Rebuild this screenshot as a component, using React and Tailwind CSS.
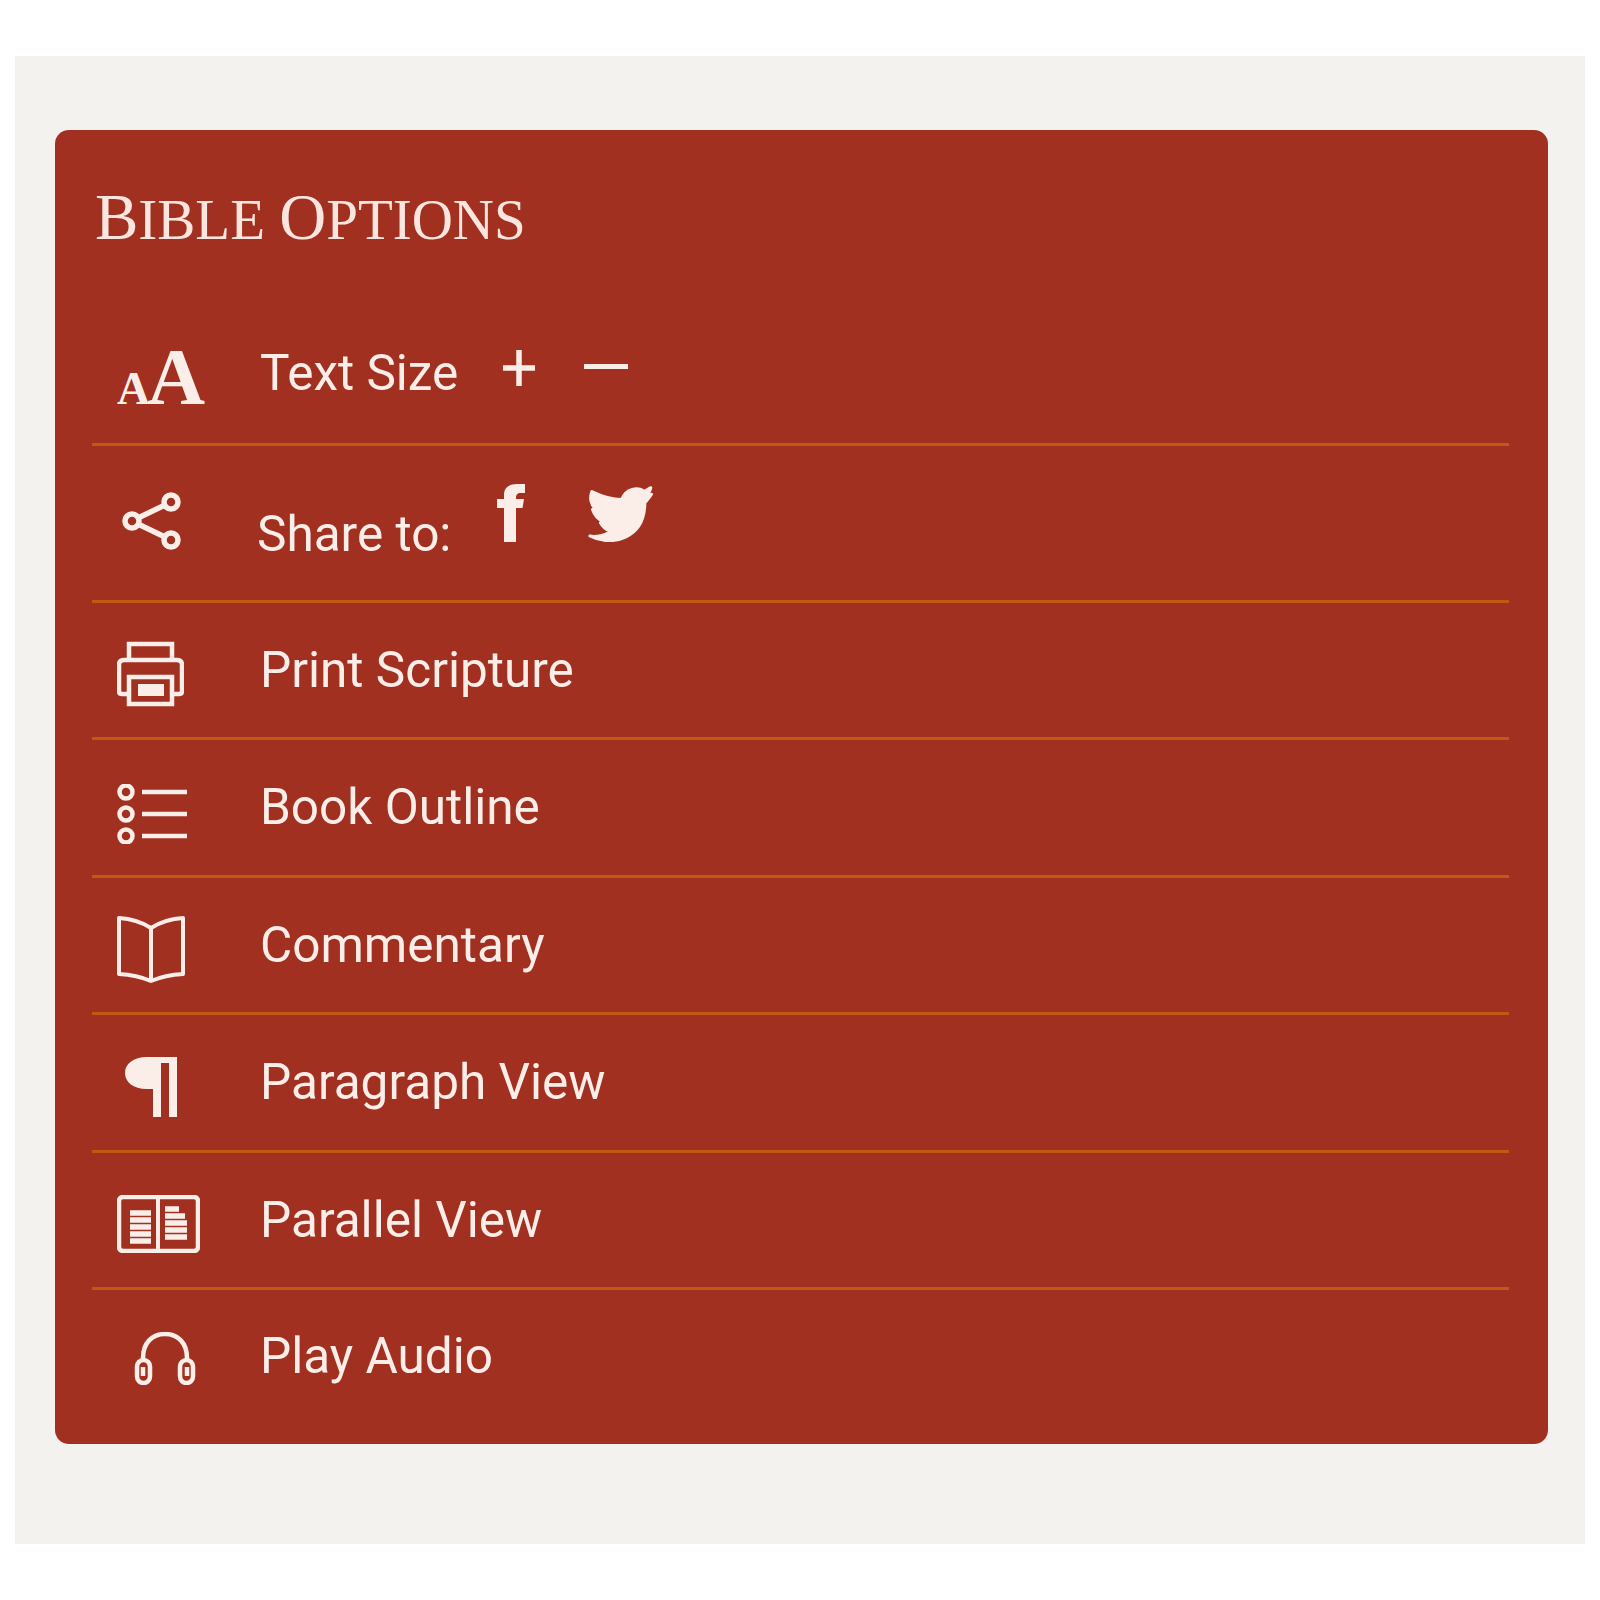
import React from 'react'

function ShareIcon() {
  return (
    <svg width="60" height="60" viewBox="0 0 60 60" fill="none" stroke="currentColor" strokeWidth="5.5">
      <circle cx="10" cy="30" r="7" />
      <circle cx="49" cy="11" r="7" />
      <circle cx="49" cy="49" r="7" />
      <path d="M16 27 L43 14 M16 33 L43 46" />
    </svg>
  )
}

function PrintIcon() {
  return (
    <svg width="67" height="66" viewBox="0 0 67 66" fill="none" stroke="currentColor" strokeWidth="4.5">
      <path d="M12 20 V3 H55 V20" />
      <path d="M12 53 H5 Q2 53 2 50 V24 Q2 19 7 19 H60 Q65 19 65 24 V50 Q65 53 62 53 H55" />
      <path d="M12 36 H55 V63 H12 Z" />
      <rect x="21" y="43" width="26" height="12" fill="currentColor" stroke="none" />
    </svg>
  )
}

function ListIcon() {
  return (
    <svg width="71" height="60" viewBox="0 0 71 60" fill="none" stroke="currentColor">
      <circle cx="9" cy="8" r="6.5" strokeWidth="4.5" />
      <circle cx="9" cy="30" r="6.5" strokeWidth="4.5" />
      <circle cx="9" cy="52" r="6.5" strokeWidth="4.5" />
      <path d="M25 8 H70 M25 30 H70 M25 52 H70" strokeWidth="4.5" />
    </svg>
  )
}

function BookIcon() {
  return (
    <svg width="68" height="67" viewBox="0 0 68 67" fill="none" stroke="currentColor" strokeWidth="4" strokeLinejoin="round">
      <path d="M34 12 Q20 3 2 2 V58 Q20 59 34 65 Q48 59 66 58 V2 Q48 3 34 12 Z" />
      <path d="M34 12 V65" />
    </svg>
  )
}

function PilcrowIcon() {
  return (
    <svg width="54" height="62" viewBox="0 0 54 62" fill="currentColor">
      <path d="M22 2 H52 V62 H44 V8 H36 V62 H28 V34 H22 C8 34 0 27 0 18 C0 9 8 2 22 2 Z" />
    </svg>
  )
}

function ParallelIcon() {
  return (
    <svg width="83" height="58" viewBox="0 0 83 58" fill="none" stroke="currentColor">
      <rect x="2" y="2" width="79" height="54" rx="4" strokeWidth="4.5" />
      <path d="M41 2 V56" strokeWidth="4" />
      <path d="M13 18 H34 M13 25 H34 M13 32 H34 M13 39 H34 M13 46 H34" strokeWidth="5.5" />
      <path d="M48 14 H62 M48 21 H68 M48 28 H70 M48 35 H70 M48 42 H70" strokeWidth="5.5" />
    </svg>
  )
}

function HeadphonesIcon() {
  return (
    <svg width="62" height="53" viewBox="0 0 62 53" fill="none" stroke="currentColor" strokeWidth="4.5">
      <path d="M9 30 V26 C9 11 18 2 31 2 C44 2 53 11 53 26 V30" />
      <rect x="3" y="28" width="13" height="23" rx="6.5" />
      <rect x="46" y="28" width="13" height="23" rx="6.5" />
      <path d="M9 35 V44 M53 35 V44" />
    </svg>
  )
}

function FacebookIcon() {
  return (
    <svg width="28" height="58" viewBox="0 0 28 58" fill="currentColor">
      <path d="M7 58 V24 H0 V15 H7 V11 C7 3 13 0 20 0 H28 V9 H24 C20 9 19 11 19 14 V15 H27 L25.5 24 H19 V58 Z" />
    </svg>
  )
}

function TwitterIcon() {
  return (
    <svg width="66" height="57" viewBox="-4 -2 198 172" fill="currentColor" stroke="currentColor" strokeWidth="9" strokeLinejoin="round">
      <path d="M188 6 L168 18 C150 2 112 8 100 42 C70 42 35 30 10 18 C2 38 8 58 20 70 L12 72 C18 90 30 102 44 108 L36 112 C42 124 52 132 66 138 C50 150 24 156 4 152 C70 186 170 160 170 52 C176 44 184 36 190 26 L172 30 C180 24 186 16 188 6 Z" />
    </svg>
  )
}

function Row({ icon, iconOffset, label }) {
  return (
    <div className="flex items-center h-[137.4px] border-b-[3px] border-[#c05a12]">
      <div className={`w-[168px] pl-[25px] flex items-center ${iconOffset}`}>{icon}</div>
      <span>{label}</span>
    </div>
  )
}

export default function App() {
  return (
    <div className="pt-[56px] pl-[15px] pb-[56px] bg-white font-['Roboto',sans-serif]">
      <div className="w-[1570px] h-[1488px] bg-[#f3f2ee] pt-[74px] pl-[40px]">
        <div className="w-[1493px] h-[1314px] bg-[#a13020] rounded-[14px] pl-[37px] pr-[39px] text-[49.5px] text-[#fbeee9]">
          <h2 className="pt-[54px] pl-[3px] h-[170px] font-['Liberation_Serif',serif] text-[57px] leading-[66px] uppercase font-normal text-[#fbe6df]">
            <span className="text-[65px]">B</span>ible <span className="text-[65px]">O</span>ptions
          </h2>

          <div className="flex items-center h-[146px] border-b-[3px] border-[#c05a12]">
            <div className="w-[168px] pl-[25px] mt-[10px] flex items-baseline font-['Liberation_Serif',serif] font-bold leading-none">
              <span className="text-[46px]">A</span>
              <span className="text-[80px] -ml-[3px]">A</span>
            </div>
            <span className="mt-[4px]">Text Size</span>
            <svg className="ml-[44px] -mt-[7px]" width="34" height="38" viewBox="0 0 34 38" fill="none" stroke="currentColor" strokeWidth="5.5">
              <path d="M17 1 V37 M1 19 H33" />
            </svg>
            <svg className="ml-[48px] -mt-[10px]" width="44" height="5" viewBox="0 0 44 5" fill="none" stroke="currentColor" strokeWidth="5">
              <path d="M0 2.5 H44" />
            </svg>
          </div>

          <div className="flex items-center h-[157px] border-b-[3px] border-[#c05a12]">
            <div className="w-[165px] pl-[30px] -mt-[4px] flex items-center"><ShareIcon /></div>
            <span className="mt-[23px]">Share to:</span>
            <div className="ml-[46px] -mt-[21px]"><FacebookIcon /></div>
            <div className="ml-[62px] -mt-[19px]"><TwitterIcon /></div>
          </div>

          <Row icon={<PrintIcon />} iconOffset="mt-[7px]" label="Print Scripture" />
          <Row icon={<ListIcon />} iconOffset="mt-[12px]" label="Book Outline" />
          <Row icon={<BookIcon />} iconOffset="mt-[9px]" label="Commentary" />
          <Row icon={<div className="pl-[8px]"><PilcrowIcon /></div>} iconOffset="mt-[8px]" label="Paragraph View" />
          <Row icon={<ParallelIcon />} iconOffset="mt-[8px]" label="Parallel View" />

          <div className="flex items-center h-[132px]">
            <div className="w-[168px] pl-[42px] mt-[6px] flex items-center"><HeadphonesIcon /></div>
            <span>Play Audio</span>
          </div>
        </div>
      </div>
    </div>
  )
}
